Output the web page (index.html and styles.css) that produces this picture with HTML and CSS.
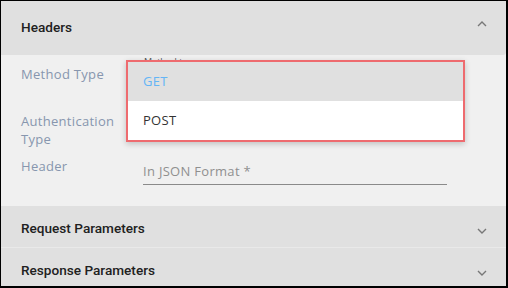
FILE: index.html
```html
<!DOCTYPE html>
<html lang="en">
<head>
  <meta charset="UTF-8">
  <meta name="viewport" content="width=device-width, initial-scale=1.0">
  <title>API Settings</title>
  <link rel="stylesheet" href="styles.css">
</head>
<body>
  <div class="accordion">
    <div class="section-head open">
      <span>Headers</span>
      <svg class="chevron" width="10" height="6" viewBox="0 0 10 6"><path d="M1 5 L5 1 L9 5" /></svg>
    </div>
    <div class="section-body">
      <div class="field-row row-method">
        <label>Method Type</label>
        <div class="control">
          <span class="float-label">Method type</span>
        </div>
      </div>
      <div class="field-row row-auth">
        <label>Authentication<br>Type</label>
        <div class="control"></div>
      </div>
      <div class="field-row row-header">
        <label>Header</label>
        <div class="control">
          <input type="text" class="text-input" placeholder="In JSON Format *">
        </div>
      </div>
    </div>
    <div class="section-head">
      <span>Request Parameters</span>
      <svg class="chevron down" width="10" height="6" viewBox="0 0 10 6"><path d="M1 1 L5 5 L9 1" /></svg>
    </div>
    <div class="section-head last">
      <span>Response Parameters</span>
      <svg class="chevron down" width="10" height="6" viewBox="0 0 10 6"><path d="M1 1 L5 5 L9 1" /></svg>
    </div>
  </div>

  <!-- open dropdown of Method Type -->
  <ul class="menu">
    <li class="selected">GET</li>
    <li>POST</li>
  </ul>
</body>
</html>
```

FILE: styles.css
```css
* {
  box-sizing: border-box;
}

body {
  margin: 0;
  width: 508px;
  height: 288px;
  overflow: hidden;
  border: 1px solid #000;
  border-right-width: 2px;
  border-bottom-width: 2px;
  background-color: #f0f0f0;
  font-family: "Open Sans", Arial, sans-serif;
  position: relative;
}

.section-head {
  display: flex;
  justify-content: space-between;
  align-items: center;
  background-color: #e0e0e0;
  padding: 2px 19px 0 20px;
  height: 42px;
  font-family: Roboto, Arial, sans-serif;
  font-weight: 500;
  font-size: 13.6px;
  color: #212121;
  border-bottom: 1px solid #e9e9e9;
}

.section-head.open {
  height: 54px;
  padding-top: 0;
  padding-bottom: 2px;
  border-bottom: none;
  border-radius: 0 0 3px 0;
}

.section-head.last {
  border-bottom: none;
}

.chevron {
  fill: none;
  stroke: #777;
  stroke-width: 1.4;
  margin-bottom: 6px;
}

.chevron.down {
  margin-bottom: 0;
  margin-top: 6px;
}

.section-body {
  height: 151px;
  padding: 10px 0 0 20px;
}

.field-row {
  display: flex;
}

.field-row label {
  width: 122px;
  font-size: 13px;
  line-height: 18px;
  color: #8796ae;
  letter-spacing: 0.3px;
}

.row-method {
  height: 47px;
}

.row-auth {
  height: 45px;
}

.control {
  position: relative;
  width: 304px;
}

.float-label {
  position: absolute;
  left: 1px;
  top: -10px;
  font-size: 9px;
  color: #555;
}

.text-input {
  margin-top: 5px;
  width: 304px;
  border: none;
  border-bottom: 1px solid #8a8a8a;
  background: transparent;
  padding: 0 0 4px 0;
  font-family: "Open Sans", Arial, sans-serif;
  font-size: 13px;
  letter-spacing: 0.3px;
  color: #333;
  outline: none;
}

.text-input::placeholder {
  color: #8f8f8f;
}

.menu {
  position: absolute;
  left: 125px;
  top: 59px;
  width: 339px;
  margin: 0;
  padding: 0;
  list-style: none;
  background-color: #fff;
  border: 2px solid #ee6b6f;
  box-shadow: 0 2px 6px rgba(0, 0, 0, 0.2);
  font-size: 13px;
  letter-spacing: 0.3px;
}

.menu li {
  height: 39px;
  line-height: 39px;
  padding-left: 15px;
  color: #333;
}

.menu li.selected {
  background-color: #e0e0e0;
  color: #64b5f6;
}
```
